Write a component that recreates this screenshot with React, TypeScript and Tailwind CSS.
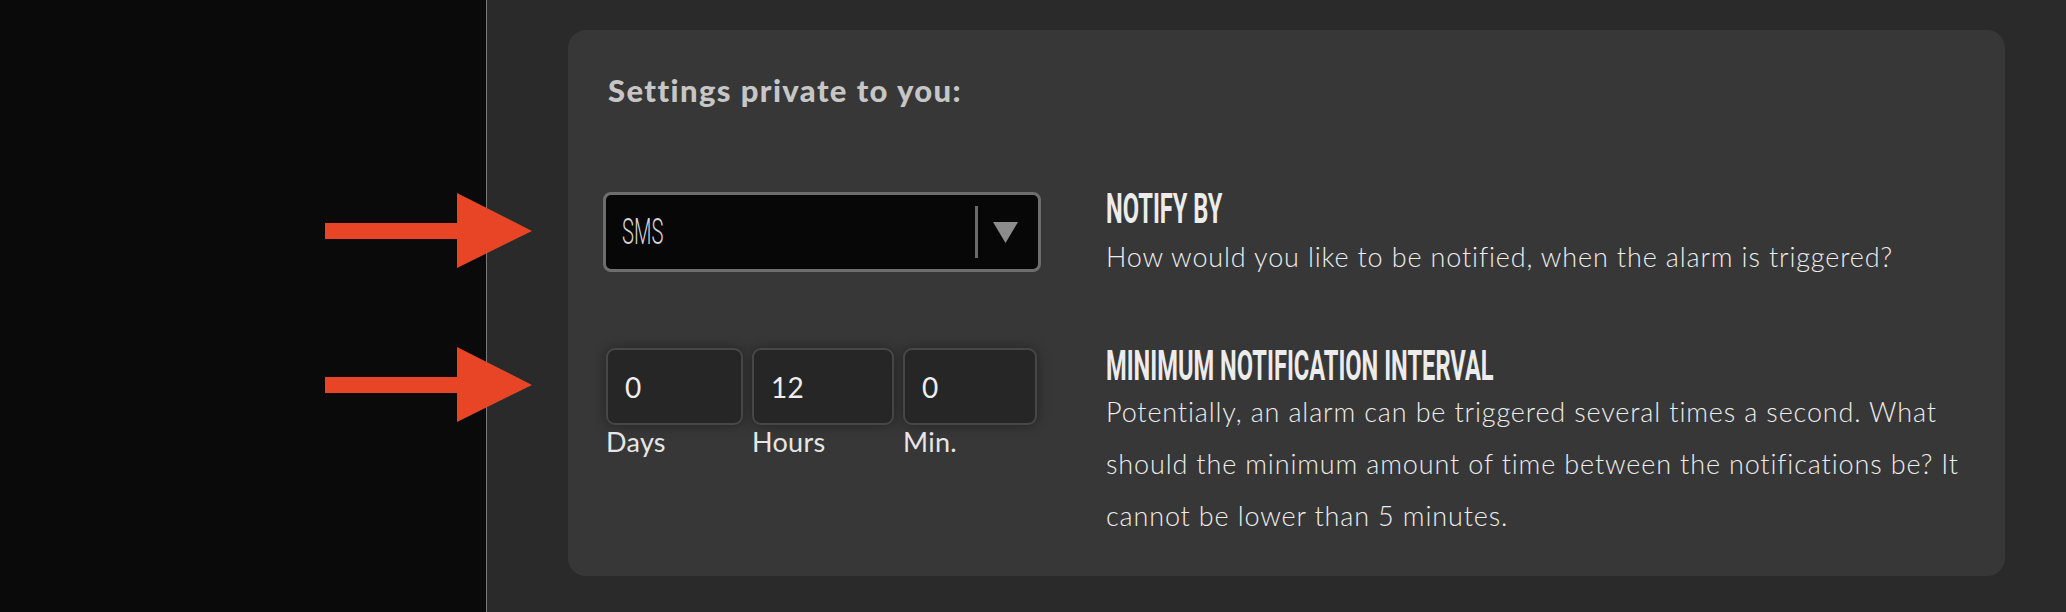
import React from "react";

export default function App() {
  return (
    <div className="relative flex h-[612px] w-full overflow-hidden bg-[#2a2a2a] font-['Lato',sans-serif]">
      {/* left dark panel */}
      <div className="h-full w-[487px] shrink-0 border-r border-[#7a7a7a] bg-[#0a0a0a]" />

      {/* right area */}
      <div className="flex-1 pl-[81px] pt-[30px]">
        <div className="h-[546px] w-[1437px] rounded-[18px] bg-[#373737] pl-[35px] pt-[43px]">
          <h2 className="ml-[5px] text-[31px] leading-[34px] font-black tracking-[1.4px] text-[#c6c6c6]">
            Settings private to you:
          </h2>

          {/* Row 1 */}
          <div className="mt-[81px] flex items-start">
            <div className="w-[438px] shrink-0 pt-[4px]">
              <div className="flex h-[80px] w-[438px] items-center rounded-[8px] border-[3px] border-[#6e6e6e] bg-[#070707] pl-[16px] pr-[20px]">
                <span className="block flex-1 origin-left scale-x-[0.56] font-['Roboto',sans-serif] text-[36px] leading-none font-light text-[#d6d6d6]">
                  SMS
                </span>
                <div className="h-[52px] w-[3px] bg-[#6a6a6a]" />
                <svg width="25" height="21" viewBox="0 0 25 21" className="ml-[15px]">
                  <polygon points="0,0 25,0 12.5,21" fill="#8c8c8c" />
                </svg>
              </div>
            </div>
            <div className="ml-[65px] flex-1">
              <div className="origin-left scale-x-[0.55] font-['Roboto',sans-serif] text-[43px] leading-[41px] font-bold text-[#ececec]">
                NOTIFY BY
              </div>
              <p className="mt-[10px] text-[27px] leading-[36px] font-light tracking-[0.85px] text-[#ededed]">
                How would you like to be notified, when the alarm is triggered?
              </p>
            </div>
          </div>

          {/* Row 2 */}
          <div className="mt-[70px] flex items-start">
            <div className="w-[438px] shrink-0 pl-[3px] pt-[3px]">
              <div className="flex gap-[9px]">
                {[
                  { v: "0", l: "Days", w: "w-[137px]" },
                  { v: "12", l: "Hours", w: "w-[142px]" },
                  { v: "0", l: "Min.", w: "w-[134px]" },
                ].map((b) => (
                  <div key={b.l} className="flex flex-col">
                    <div
                      className={`${b.w} flex h-[77px] items-center rounded-[9px] border-2 border-[#474747] bg-[#262626] pl-[17px] text-[28px] tracking-[0.3px] text-[#eeeeee] shadow-[0_0_12px_rgba(0,0,0,0.35)]`}
                    >
                      {b.v}
                    </div>
                    <span className="mt-[1px] text-[27px] leading-[32px] tracking-[0.3px] text-[#e6e6e6]">{b.l}</span>
                  </div>
                ))}
              </div>
            </div>
            <div className="ml-[65px] flex-1">
              <div className="origin-left scale-x-[0.55] font-['Roboto',sans-serif] text-[43px] leading-[41px] font-bold text-[#ececec]">
                MINIMUM NOTIFICATION INTERVAL
              </div>
              <p className="text-[27px] leading-[52px] font-light tracking-[0.85px] text-[#ededed]">
                <span className="block whitespace-nowrap">Potentially, an alarm can be triggered several times a second. What</span>
                <span className="block whitespace-nowrap">should the minimum amount of time between the notifications be? It</span>
                <span className="block whitespace-nowrap">cannot be lower than 5 minutes.</span>
              </p>
            </div>
          </div>
        </div>
      </div>

      {/* annotation arrows */}
      <svg
        className="pointer-events-none absolute left-[325px] top-[193px]"
        width="208"
        height="76"
        viewBox="0 0 208 76"
      >
        <rect x="0" y="30" width="133" height="16" fill="#e84426" />
        <polygon points="132,0 207,38 132,75" fill="#e84426" />
      </svg>
      <svg
        className="pointer-events-none absolute left-[325px] top-[347px]"
        width="208"
        height="76"
        viewBox="0 0 208 76"
      >
        <rect x="0" y="30" width="133" height="16" fill="#e84426" />
        <polygon points="132,0 207,38 132,75" fill="#e84426" />
      </svg>
    </div>
  );
}
